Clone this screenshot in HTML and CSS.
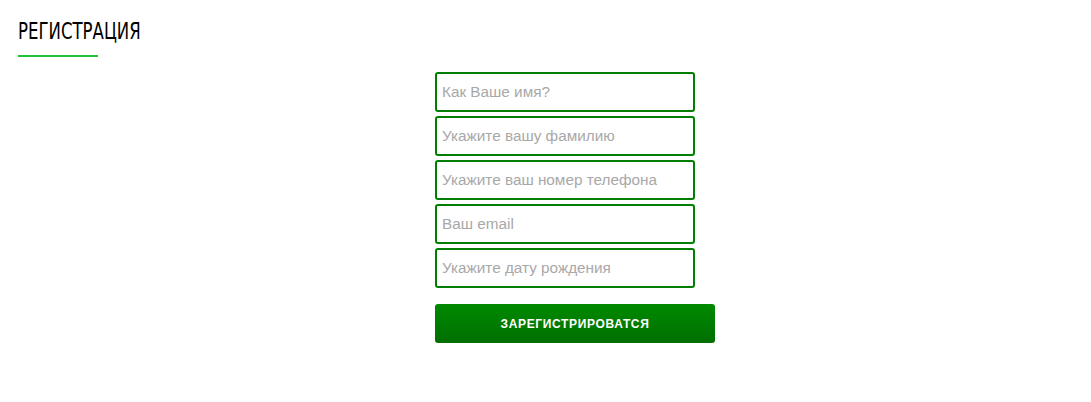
FILE: index.html
```html
<!DOCTYPE html>
<html lang="ru">
<head>
<meta charset="utf-8">
<link rel="stylesheet" href="styles.css">
</head>
<body>
<div class="page">
  <h1 class="title">РЕГИСТРАЦИЯ</h1>
  <div class="title-line"></div>
  <form class="form">
    <input class="field" type="text" placeholder="Как Ваше имя?">
    <input class="field" type="text" placeholder="Укажите вашу фамилию">
    <input class="field" type="text" placeholder="Укажите ваш номер телефона">
    <input class="field" type="text" placeholder="Ваш email">
    <input class="field" type="text" placeholder="Укажите дату рождения">
    <button class="submit" type="button">ЗАРЕГИСТРИРОВАТСЯ</button>
  </form>
</div>
</body>
</html>
```

FILE: styles.css
```css
html, body {
  margin: 0;
  padding: 0;
  background: #fff;
}
.page {
  padding: 18px 0 0 18px;
}
.title {
  margin: 0;
  font-family: "DejaVu Sans", sans-serif;
  font-weight: normal;
  font-size: 23px;
  line-height: 26px;
  color: #000;
  transform: scaleX(0.72);
  transform-origin: left center;
  white-space: nowrap;
}
.title-line {
  width: 80px;
  height: 2px;
  background: #22c23a;
  margin-top: 11px;
}
.form {
  width: 280px;
  margin: 15px 0 0 417px;
  display: flex;
  flex-direction: column;
  gap: 4px;
}
.field {
  box-sizing: border-box;
  width: 260px;
  height: 40px;
  border: 2px solid #007f00;
  border-radius: 3px;
  padding: 0 5px;
  font-family: "Liberation Sans", Arial, sans-serif;
  font-size: 15.3px;
  color: #333;
  outline: none;
}
.field::placeholder {
  color: #a8a8a8;
}
.submit {
  margin-top: 12px;
  width: 280px;
  height: 39px;
  border: none;
  border-radius: 3px;
  background: linear-gradient(#008a00, #006f00);
  color: #fff;
  font-family: "Liberation Sans", Arial, sans-serif;
  font-weight: bold;
  font-size: 12px;
  letter-spacing: 0.65px;
}
```
